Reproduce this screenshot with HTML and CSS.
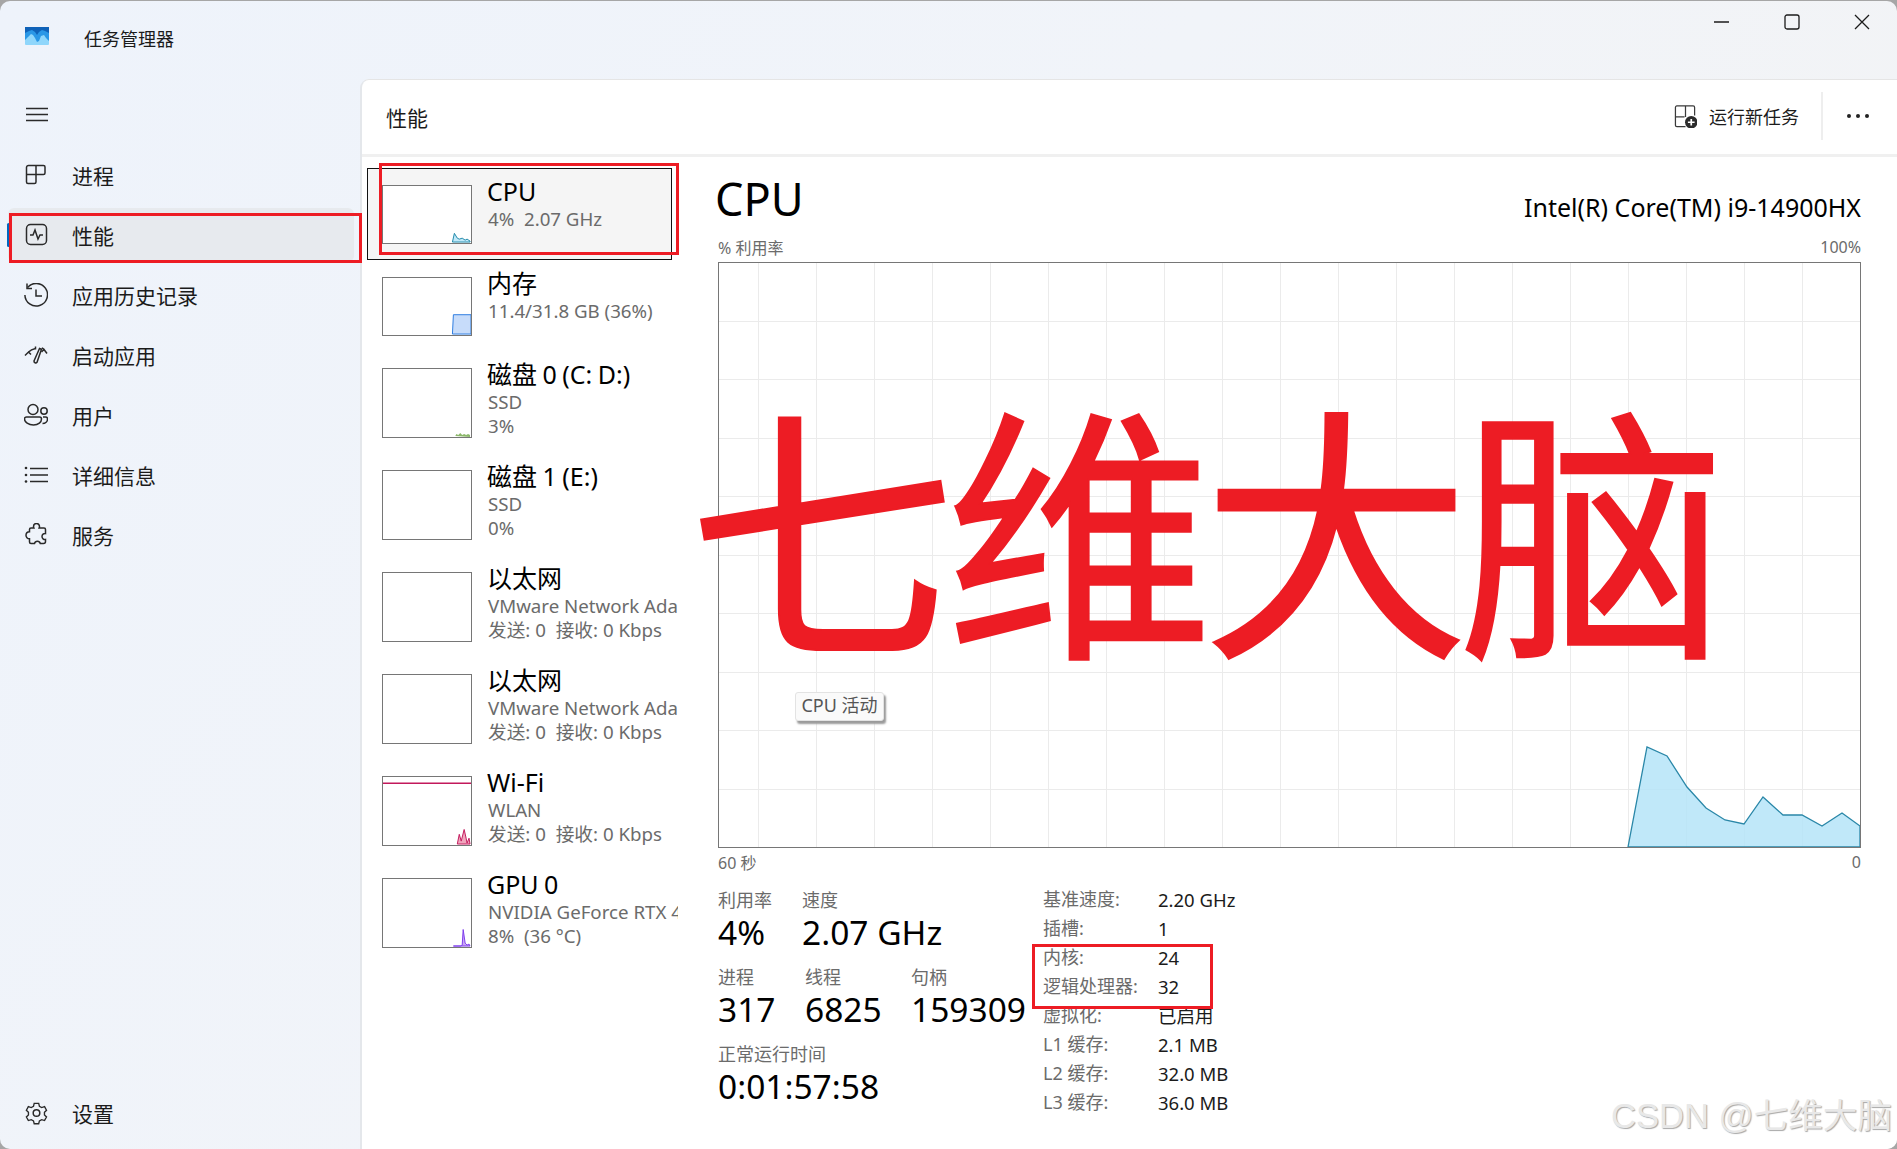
FILE: index.html
```html
<!DOCTYPE html>
<html lang="zh-CN">
<head>
<meta charset="utf-8">
<title>任务管理器</title>
<link rel="stylesheet" href="styles.css">
</head>
<body>
<div class="window">
  <header class="titlebar">
    <div class="app">
      <svg class="app-icon" viewBox="0 0 24 18"><rect width="24" height="18" rx="1" fill="#8fd6fb"/><path d="M0 13l3-3 3-3 2 1 2 3 2 4 2-1 2-5 3-1 2 3 3 3V0H0z" fill="#2a97e6"/><path d="M0 6l4-2 3-1 3 2 2 3 2-3 3-2 3 1 4 2V0H0z" fill="#0f62b8"/></svg>
      <span class="app-title">任务管理器</span>
    </div>
    <div class="controls">
      <svg class="ctl" viewBox="0 0 16 16"><path d="M0 8h15" /></svg>
      <svg class="ctl" viewBox="0 0 16 16"><rect x="1" y="1" width="14" height="14" rx="2"/></svg>
      <svg class="ctl" viewBox="0 0 16 16"><path d="M1 1l14 14M15 1L1 15"/></svg>
    </div>
  </header>
  <div class="body">
    <nav class="sidebar">
      <div class="burger"><svg class="icon" viewBox="0 0 24 24"><path d="M1 4.500h22M1 10.500h22M1 16.500h22"/></svg></div>
      <div class="nav-top">
        <a class="nav-item"><svg class="icon" viewBox="0 0 24 24"><path d="M12 2.500H4.500a2 2 0 0 0-2 2V19a1.500 1.500 0 0 0 1.500 1.500h6.500a1.500 1.500 0 0 0 1.500-1.500V2.500h7.500a1.500 1.500 0 0 1 1.500 1.500v6a1.500 1.500 0 0 1-1.500 1.500H2.500"/></svg><span>进程</span></a>
        <a class="nav-item active"><svg class="icon" viewBox="0 0 24 24"><rect x="2.500" y="1.500" width="20" height="20" rx="4"/><path d="M6 12h3l2-5 3 9 2-4h3"/></svg><span>性能</span></a>
        <a class="nav-item"><svg class="icon" viewBox="0 0 24 24"><path d="M3.500 4.500A11.300 11.300 0 1 1 .9 12"/><path d="M3 .5v5h5M12 6.500V13h6"/></svg><span>应用历史记录</span></a>
        <a class="nav-item"><svg class="icon" viewBox="0 0 24 24"><path d="M1 12.500l3.500-3.500 2.500 2.500M4.500 9C6.500 7 9 6 11.500 5.500M11.500 3.500v3M23 10.500l-3-4-2.500 2.500M20 6.500c-.7-.7-1.500-1.200-2.200-1.600"/><path d="M15.500 5.500l-5.500 12.500a1.700 1.700 0 0 0 3 1.300l4.500-13z"/></svg><span>启动应用</span></a>
        <a class="nav-item"><svg class="icon" viewBox="0 0 24 24"><circle cx="9" cy="6.500" r="5"/><circle cx="20" cy="8" r="3.200"/><path d="M2.500 14h13a2 2 0 0 1 2 2c0 3-3 6-8 6s-9-3-9-6a2 2 0 0 1 2-2zM19 14h2.500a2 2 0 0 1 2 2c0 2.500-2 4.500-5 4.500"/></svg><span>用户</span></a>
        <a class="nav-item"><svg class="icon" viewBox="0 0 24 24"><path d="M6 5.500h18M6 12h18M6 18.500h18"/><circle class="dot" cx="2" cy="5" r="1.300"/><circle class="dot" cx="2" cy="12" r="1.300"/><circle class="dot" cx="2" cy="18.500" r="1.300"/></svg><span>详细信息</span></a>
        <a class="nav-item"><svg class="icon" viewBox="0 0 24 24"><path d="M9.500 3.500a3 3 0 0 1 6 0c0 .6-.2 1-.4 1.500H20a1.500 1.500 0 0 1 1.500 1.500v4a3 3 0 0 0-3.500 3 3 3 0 0 0 3.500 3v2a2 2 0 0 1-2 2h-3.200a3 3 0 0 0-5.800 0H7a1.500 1.500 0 0 1-1.500-1.500v-3.200A3.500 3.500 0 0 1 2 12a3.500 3.500 0 0 1 3.500-3.300V6.500A1.500 1.500 0 0 1 7 5h2.900c-.2-.5-.4-.9-.4-1.500z"/></svg><span>服务</span></a>
      </div>
      <a class="nav-item settings"><svg class="icon" viewBox="0 0 24 24"><circle cx="12.500" cy="12" r="3.300"/><path d="M10 1.500h5l.8 3.300 2.500 1.400 3.200-1 2.200 4-2.300 2.300v2.800l2.300 2.300-2.200 4-3.200-1-2.500 1.400-.8 3.200h-5l-.8-3.200-2.500-1.400-3.200 1-2.200-4 2.300-2.300v-2.800L1.300 9.200l2.200-4 3.200 1 2.500-1.400z" transform="translate(1.200 1) scale(.9)"/></svg><span>设置</span></a>
    </nav>
    <main class="panel">
      <div class="panel-head">
        <h1 class="panel-title">性能</h1>
        <div class="tools">
          <a class="run-task">
            <svg class="run-icon" viewBox="0 0 24 24"><path d="M3 1h17a1.500 1.500 0 0 1 1.500 1.500V11M1.500 12.500h9.500M12 1v11.500M1.500 2.500A1.500 1.500 0 0 1 3 1M1.500 2.500V21a1.500 1.500 0 0 0 1.500 1.500h9"/><circle class="plus-bg" cx="18" cy="18" r="6.500"/><path class="plus" d="M18 14.500v7M14.500 18h7"/></svg>
            <span>运行新任务</span>
          </a>
          <a class="more"><i></i><i></i><i></i></a>
        </div>
      </div>
      <div class="content">
        <section class="devices">
          <div class="device selected">
            <div class="thumb short"><svg viewBox="0 0 90 59" preserveAspectRatio="none"><path class="cpu-fill" d="M71 58L73 49 76 54 78 55 81 54 84 56 86 55 89 57V58Z"/></svg></div>
            <div class="dev-text"><div class="dev-name">CPU</div><div class="dev-sub">4%&nbsp; 2.07 GHz</div></div>
          </div>
          <div class="device">
            <div class="thumb short"><svg viewBox="0 0 90 59" preserveAspectRatio="none"><path class="mem-fill" d="M71 58L72 38H90V58Z"/></svg></div>
            <div class="dev-text"><div class="dev-name">内存</div><div class="dev-sub">11.4/31.8 GB (36%)</div></div>
          </div>
          <div class="device tall">
            <div class="thumb"><svg viewBox="0 0 90 70" preserveAspectRatio="none"><path class="disk-fill" d="M74 69l1-2 2 1 2-2 2 2 2-1 2 1 2-1 2 1v2z"/></svg></div>
            <div class="dev-text"><div class="dev-name">磁盘 0 (C: D:)</div><div class="dev-sub">SSD</div><div class="dev-sub">3%</div></div>
          </div>
          <div class="device tall">
            <div class="thumb"></div>
            <div class="dev-text"><div class="dev-name">磁盘 1 (E:)</div><div class="dev-sub">SSD</div><div class="dev-sub">0%</div></div>
          </div>
          <div class="device tall">
            <div class="thumb"></div>
            <div class="dev-text"><div class="dev-name">以太网</div><div class="dev-sub">VMware Network Ada</div><div class="dev-sub">发送: 0&nbsp; 接收: 0 Kbps</div></div>
          </div>
          <div class="device tall">
            <div class="thumb"></div>
            <div class="dev-text"><div class="dev-name">以太网</div><div class="dev-sub">VMware Network Ada</div><div class="dev-sub">发送: 0&nbsp; 接收: 0 Kbps</div></div>
          </div>
          <div class="device tall">
            <div class="thumb"><svg viewBox="0 0 90 70" preserveAspectRatio="none"><path class="wifi-line" d="M0 6.500H90"/><path class="wifi-fill" d="M76 69l2-10 2 7 3-12 2 9 1 5 2-5 1 6z"/></svg></div>
            <div class="dev-text"><div class="dev-name">Wi-Fi</div><div class="dev-sub">WLAN</div><div class="dev-sub">发送: 0&nbsp; 接收: 0 Kbps</div></div>
          </div>
          <div class="device tall">
            <div class="thumb"><svg viewBox="0 0 90 70" preserveAspectRatio="none"><path class="gpu-fill" d="M72 69h8l1-1 1-16 2 14 2 2 2-1 1 2z"/></svg></div>
            <div class="dev-text"><div class="dev-name">GPU 0</div><div class="dev-sub">NVIDIA GeForce RTX 4</div><div class="dev-sub">8%&nbsp; (36 °C)</div></div>
          </div>
        </section>
        <section class="detail">
          <div class="detail-head">
            <h2 class="detail-title">CPU</h2>
            <div class="model">Intel(R) Core(TM) i9-14900HX</div>
          </div>
          <div class="axis axis-top"><span>% 利用率</span><span>100%</span></div>
          <div class="chart">
            <svg class="chart-svg" viewBox="0 0 1141 584" preserveAspectRatio="none">
              <path class="grid" d="M39.500 0V584M97.500 0V584M155.500 0V584M213.500 0V584M271.500 0V584M329.500 0V584M387.500 0V584M445.500 0V584M503.500 0V584M561.500 0V584M619.500 0V584M677.500 0V584M735.500 0V584M793.500 0V584M851.500 0V584M909.500 0V584M967.500 0V584M1025.500 0V584M1083.500 0V584"/>
              <path class="grid" d="M0 58.500H1141M0 116.500H1141M0 175.500H1141M0 233.500H1141M0 292.500H1141M0 350.500H1141M0 409.500H1141M0 467.500H1141M0 526.500H1141"/>
              <path class="area" d="M909 584L928 484 948 493 968 524 987 545 1006 557 1025 561 1044 534 1064 552 1083 552 1103 563 1123 550 1141 563V584Z"/>
            </svg>
            <div class="tip">CPU 活动</div>
          </div>
          <div class="axis axis-bottom"><span>60 秒</span><span>0</span></div>
          <div class="stats">
            <div class="stats-left">
              <div class="stat-row">
                <div class="stat w84"><div class="stat-label">利用率</div><div class="stat-value">4%</div></div>
                <div class="stat"><div class="stat-label">速度</div><div class="stat-value">2.07 GHz</div></div>
              </div>
              <div class="stat-row">
                <div class="stat w87"><div class="stat-label">进程</div><div class="stat-value">317</div></div>
                <div class="stat w106"><div class="stat-label">线程</div><div class="stat-value">6825</div></div>
                <div class="stat"><div class="stat-label">句柄</div><div class="stat-value">159309</div></div>
              </div>
              <div class="stat-row">
                <div class="stat"><div class="stat-label">正常运行时间</div><div class="stat-value">0:01:57:58</div></div>
              </div>
            </div>
            <dl class="specs">
              <dt>基准速度:</dt><dd>2.20 GHz</dd>
              <dt>插槽:</dt><dd>1</dd>
              <dt>内核:</dt><dd>24</dd>
              <dt>逻辑处理器:</dt><dd>32</dd>
              <dt>虚拟化:</dt><dd>已启用</dd>
              <dt>L1 缓存:</dt><dd>2.1 MB</dd>
              <dt>L2 缓存:</dt><dd>32.0 MB</dd>
              <dt>L3 缓存:</dt><dd>36.0 MB</dd>
            </dl>
          </div>
        </section>
      </div>
    </main>
  </div>
</div>
<div class="mark mark-nav"></div>
<div class="mark mark-cpu"></div>
<div class="mark mark-spec"></div>
<div class="bigtext">七维大脑</div>
<div class="watermark">CSDN @七维大脑</div>
</body>
</html>
```
FILE: styles.css
```css
* { box-sizing: border-box; }
html, body { margin: 0; padding: 0; height: 100%; }
body {
  position: relative;
  width: 1897px;
  height: 1149px;
  overflow: hidden;
  background: #a6a6a6;
  padding-top: 1px;
  font-family: "Noto Sans", "Noto Sans CJK SC", sans-serif;
  color: #1b1b1b;
}
.window {
  width: 1897px;
  height: 1148px;
  border-radius: 10px;
  overflow: hidden;
  display: flex;
  flex-direction: column;
  background: linear-gradient(125deg, #eef3fb 0%, #f1f4f9 45%, #f3f3f3 100%);
}
.titlebar {
  height: 78px;
  display: flex;
  justify-content: space-between;
  align-items: flex-start;
  flex: none;
}
.app { display: flex; align-items: flex-start; padding: 25px 0 0 25px; }
.app-icon { width: 24px; height: 18px; display: block; margin-top: 1px; }
.app-title { margin-left: 35px; font-size: 18px; line-height: 24px; font-family: "Noto Sans CJK SC", sans-serif; }
.controls { display: flex; padding: 13px 27px 0 0; gap: 54px; }
.ctl { width: 16px; height: 16px; fill: none; stroke: #1b1b1b; stroke-width: 1.300; display: block; }
.body { flex: 1; display: flex; min-height: 0; }
.sidebar { width: 360px; flex: none; display: flex; flex-direction: column; padding: 0 6px 0 8px; }
.burger { height: 69px; padding: 25px 0 0 17px; flex: none; }
.icon { width: 24px; height: 24px; fill: none; stroke: #2a2a2a; stroke-width: 1.500; flex: none; display: block; }
.icon .dot { fill: #2a2a2a; stroke: none; }
.nav-top { display: flex; flex-direction: column; gap: 6px; flex: 1; }
.nav-item {
  height: 54px;
  flex: none;
  display: flex;
  align-items: center;
  gap: 24px;
  padding-left: 16px;
  border-radius: 6px;
  font-size: 21px;
  font-family: "Noto Sans CJK SC", sans-serif;
  position: relative;
}
.nav-item.active { background: #e7eaee; }
.nav-item.active::before {
  content: "";
  position: absolute;
  left: -1px;
  top: 15px;
  width: 3px;
  height: 24px;
  border-radius: 2px;
  background: #0067c0;
}
.settings { margin-bottom: 9px; }
.panel {
  flex: 1;
  min-width: 0;
  background: #fff;
  border-top: 1px solid #e5e5e5;
  border-left: 2px solid #e4e7eb;
  border-top-left-radius: 9px;
  display: flex;
  flex-direction: column;
}
.panel-head {
  height: 77px;
  flex: none;
  border-bottom: 3px solid #f0f0f0;
  display: flex;
  justify-content: space-between;
  align-items: center;
  padding: 0 28px 0 24px;
}
.panel-title { margin: 0; font-size: 21px; font-weight: 400; font-family: "Noto Sans CJK SC", sans-serif; }
.tools { display: flex; align-items: center; }
.run-task { display: flex; align-items: center; gap: 12px; font-size: 18px; font-family: "Noto Sans CJK SC", sans-serif; padding-right: 22px; height: 48px; border-right: 2px solid #eeeeee; margin-bottom: 2px; }
.run-icon { width: 23px; height: 23px; fill: none; stroke: #3a3a3a; stroke-width: 1.300; }
.run-icon .plus-bg { fill: #2b2b2b; stroke: none; }
.run-icon .plus { stroke: #fff; stroke-width: 1.800; }
.more { display: flex; gap: 5px; margin-left: 24px; margin-bottom: 2px; }
.more i { display: block; width: 4px; height: 4px; border-radius: 50%; background: #222; }
.content { flex: 1; display: flex; min-height: 0; }
.devices { width: 354px; flex: none; padding: 11px 0 0 5px; display: flex; flex-direction: column; }
.device {
  width: 305px;
  height: 92px;
  display: flex;
  gap: 15px;
  padding: 17px 0 0 15px;
  flex: none;
  margin-bottom: -1px;
}
.device.tall { height: 102px; margin-bottom: 0; }
.device.selected { background: #f5f5f5; outline: 1px solid #111; outline-offset: -1px; margin-bottom: 0; }
.thumb { width: 90px; height: 70px; flex: none; border: 1px solid #767676; background: #fff; }
.thumb.short { height: 59px; }
.thumb svg { width: 100%; height: 100%; display: block; }
.cpu-fill { fill: #c0e9f9; stroke: #1f87a8; stroke-width: 1; }
.mem-fill { fill: #c7dcfa; stroke: #2a7be0; stroke-width: 1; }
.disk-fill { fill: #8cb86a; }
.wifi-line { stroke: #c2185b; stroke-width: 1.500; fill: none; }
.wifi-fill { fill: #f0a6bd; stroke: #c2185b; stroke-width: 1; }
.gpu-fill { fill: #c9a6f5; stroke: #7c3aed; stroke-width: 1; }
.dev-text { width: 191px; flex: none; margin-top: -9px; white-space: nowrap; }
.dev-name { font-size: 25px; line-height: 31px; color: #000; word-spacing: -1px; }
.dev-sub { font-size: 18.700px; line-height: 24px; color: #6b6b6b; padding-left: 1px; overflow-x: clip; }
.detail { flex: 1; min-width: 0; padding: 12px 36px 0 2px; }
.detail-head { height: 60px; display: flex; justify-content: space-between; align-items: center; }
.detail-title { margin: 0; font-size: 45px; line-height: 60px; font-weight: 400; color: #000; margin-left: -3px; }
.model { font-size: 25px; line-height: 32px; color: #000; margin-top: 16px; }
.axis { display: flex; justify-content: space-between; font-size: 16px; color: #6b6b6b; }
.axis-top { height: 33px; align-items: center; padding-top: 2px; }
.axis-bottom { height: 28px; align-items: center; }
.chart { position: relative; height: 586px; border: 1px solid #767676; }
.chart-svg { width: 100%; height: 100%; display: block; }
.grid { stroke: #ebebeb; stroke-width: 1; fill: none; }
.area { fill: #b5e4f8; fill-opacity: .85; stroke: #2a87a8; stroke-width: 1.300; }
.tip {
  position: absolute;
  left: 76px;
  top: 429px;
  width: 89px;
  height: 29px;
  background: #fafafa;
  border: 1px solid #e3e3e3;
  border-radius: 3px;
  box-shadow: 2px 3px 2px #9a9a9a;
  font-size: 18px;
  line-height: 25px;
  text-align: center;
  color: #555;
  white-space: nowrap;
}
.stats { display: flex; padding-top: 12px; }
.stats-left { width: 325px; flex: none; display: flex; flex-direction: column; gap: 13px; }
.stat-row { display: flex; }
.w84 { width: 84px; }
.w87 { width: 87px; }
.w106 { width: 106px; }
.stat-label { font-size: 18px; line-height: 24px; color: #6b6b6b; }
.stat-value { font-size: 33.500px; line-height: 40px; color: #000; }
.specs { margin: -3px 0 0 0; display: grid; grid-template-columns: 115px auto; grid-auto-rows: 29px; font-size: 18px; line-height: 29px; }
.specs dt { color: #6b6b6b; }
.specs dd { margin: 0; font-size: 18.500px; color: #1b1b1b; }
.mark { position: absolute; border: 3px solid #ed1c24; pointer-events: none; }
.mark-nav { left: 9px; top: 213px; width: 353px; height: 50px; }
.mark-cpu { left: 379px; top: 163px; width: 300px; height: 92px; }
.mark-spec { left: 1032px; top: 944px; width: 181px; height: 65px; }
.bigtext {
  position: absolute;
  left: 688px;
  top: 356px;
  font-family: "Noto Sans CJK SC", sans-serif;
  font-size: 268px;
  letter-spacing: -11px;
  line-height: 330px;
  white-space: nowrap;
  color: #ed1c24;
  -webkit-text-stroke: 2px #ed1c24;
}
.watermark {
  position: absolute;
  right: 5px;
  top: 1093px;
  font-family: "Liberation Sans", "Noto Sans CJK SC", sans-serif;
  font-size: 34.600px;
  line-height: 46px;
  color: #e8e8e8;
  text-shadow: 1px 1px 1px #a8a8a8;
  white-space: nowrap;
}
```
